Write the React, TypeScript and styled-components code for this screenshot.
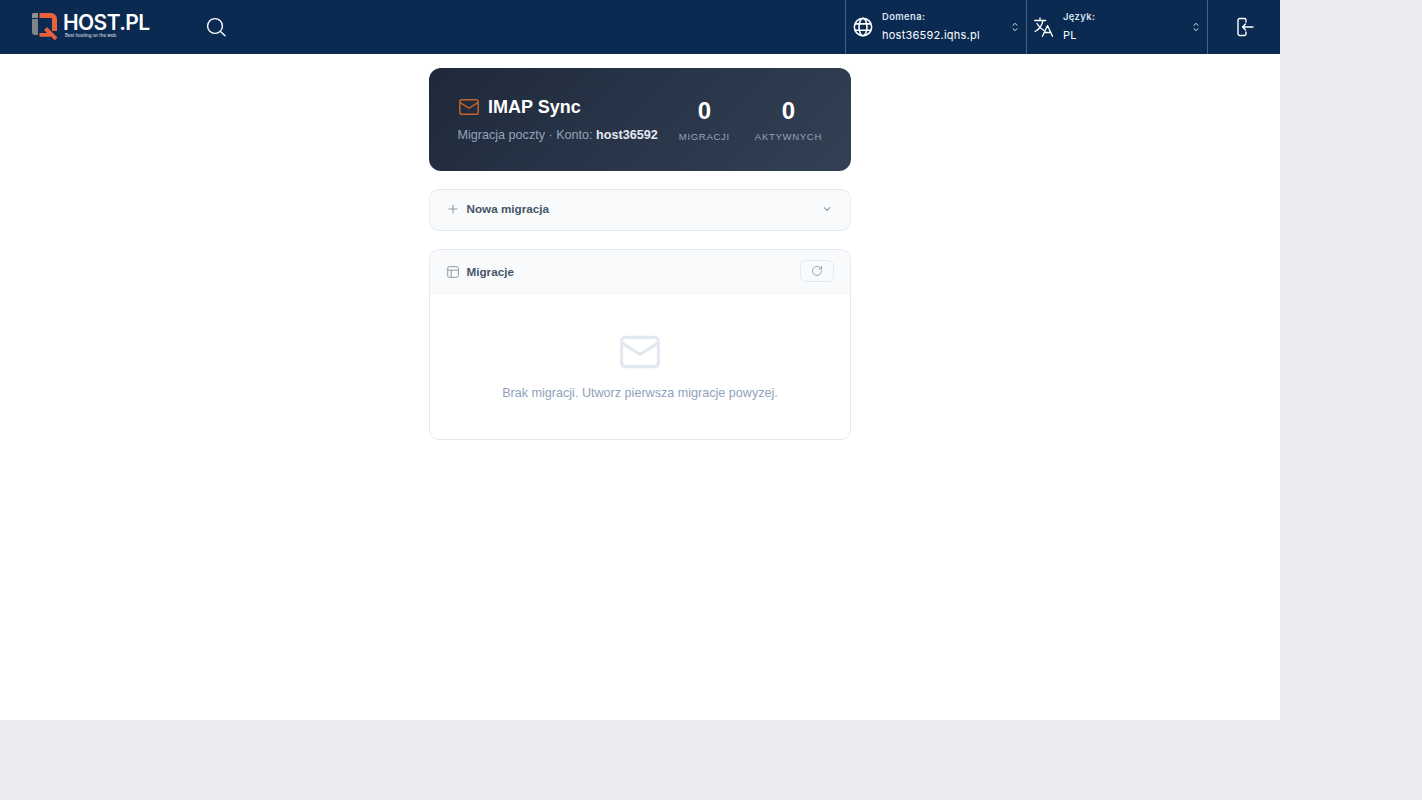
import React from "react";
import styled, { createGlobalStyle } from "styled-components";

const Global = createGlobalStyle`
  html, body { margin: 0; padding: 0; background: #eaeaef; height: 100%; }
  * { box-sizing: border-box; }
`;

const App_ = styled.div`
  width: 1280px;
  height: 720px;
  background: #fff;
  display: flex;
  flex-direction: column;
  font-family: "Liberation Sans", Arial, sans-serif;
`;

const TopBar = styled.header`
  height: 54px;
  background: #0a2a52;
  display: flex;
  align-items: stretch;
  flex: none;
`;

const LogoBox = styled.div`
  width: 206px;
  padding: 13px 0 0 31px;
  display: flex;
  align-items: flex-start;
  gap: 4px;
  flex: none;
`;

const LogoMark = styled.svg`
  flex: none;
  margin-top: -1px;
`;

const LogoWords = styled.div`
  display: flex;
  flex-direction: column;
  color: #fff;
`;

const LogoName = styled.span`
  font-family: Inter, sans-serif;
  font-weight: 600;
  font-size: 21px;
  line-height: 20px;
  height: 20px;
  letter-spacing: -0.6px;
  white-space: nowrap;
`;

const LogoTag = styled.span`
  font-family: Inter, sans-serif;
  font-size: 4.5px;
  line-height: 5px;
  padding-left: 2px;
  color: #e6ebf2;
  white-space: nowrap;
`;

const SearchBtn = styled.div`
  display: flex;
  align-items: center;
  flex: 1;
  color: #fff;
`;

const Selector = styled.div<{ $pad: number }>`
  width: 181px;
  border-left: 1px solid #4a6384;
  display: flex;
  align-items: center;
  padding-left: ${(p) => p.$pad}px;
  color: #fff;
  flex: none;
`;

const SelectorText = styled.div<{ $gap: number }>`
  display: flex;
  flex-direction: column;
  margin-left: ${(p) => p.$gap}px;
  font-family: Inter, "Noto Sans", sans-serif;
  flex: 1;
  padding-top: 1px;
`;

const SelectorLabel = styled.span`
  font-size: 9.4px;
  line-height: 13px;
  font-weight: 600;
  letter-spacing: 0.4px;
  color: #dbe3ee;
`;

const SelectorValue = styled.span`
  font-size: 11px;
  line-height: 19px;
  font-weight: 400;
  letter-spacing: 0.24px;
  color: #fff;
  margin-top: 3px;
`;

const Chevrons = styled.div`
  width: 8px;
  margin-right: 7px;
  display: flex;
  color: #dfe6ef;
`;

const LogoutBox = styled.div`
  width: 73px;
  border-left: 1px solid #4a6384;
  display: flex;
  align-items: center;
  justify-content: center;
  padding-left: 2px;
  color: #fff;
  flex: none;
`;

const Main = styled.main`
  width: 422px;
  margin: 14px auto 0;
  display: flex;
  flex-direction: column;
`;

const Hero = styled.section`
  height: 103px;
  border-radius: 12px;
  background: linear-gradient(135deg, #1e293b 0%, #334155 100%);
  display: flex;
  align-items: center;
  justify-content: space-between;
  padding: 0 29px 0 28.5px;
`;

const HeroLeft = styled.div`
  display: flex;
  flex-direction: column;
`;

const HeroTitle = styled.h1`
  margin: 0;
  display: flex;
  align-items: center;
  gap: 8.5px;
  font-size: 18px;
  line-height: 22px;
  font-weight: 700;
  color: #fff;
`;

const HeroSub = styled.p`
  margin: 9px 0 0;
  font-size: 12.6px;
  line-height: 16px;
  color: #94a3b8;
  white-space: nowrap;
  strong {
    color: #e2e8f0;
    font-weight: 700;
  }
`;

const Stats = styled.div`
  display: flex;
  gap: 25px;
  padding-top: 1px;
`;

const Stat = styled.div`
  display: flex;
  flex-direction: column;
  align-items: center;
`;

const StatNum = styled.span`
  font-size: 24px;
  line-height: 28px;
  font-weight: 700;
  color: #fff;
`;

const StatLabel = styled.span`
  font-size: 9.6px;
  line-height: 12px;
  margin-top: 6px;
  letter-spacing: 0.65px;
  text-transform: uppercase;
  color: #94a3b8;
`;

const Collapse = styled.section`
  height: 42px;
  margin-top: 18px;
  border: 1px solid #e8edf3;
  border-top-color: #e2e8f0;
  border-bottom-color: #e2e8f0;
  border-radius: 10px;
  background: #f8fafc;
  display: flex;
  align-items: center;
  padding: 0 18px 2px 17px;
  color: #8e9aab;
`;

const SectionTitle = styled.span<{ $raise?: number }>`
  margin-left: 7.5px;
  margin-bottom: ${(p) => p.$raise ?? 0}px;
  font-size: 11.7px;
  font-weight: 700;
  color: #475569;
  flex: 1;
`;

const Panel = styled.section`
  height: 191px;
  margin-top: 18px;
  border: 1px solid #e5eaf0;
  border-radius: 10px;
  overflow: hidden;
  display: flex;
  flex-direction: column;
`;

const PanelHead = styled.div`
  height: 44px;
  background: #f8fafc;
  border-bottom: 1px solid #f1f5f9;
  display: flex;
  align-items: center;
  padding: 0 16px 0 17px;
  color: #8e9aab;
  flex: none;
`;

const RefreshBtn = styled.div`
  width: 34px;
  height: 22px;
  margin-bottom: 2px;
  border: 1px solid #e2e8f0;
  border-radius: 6px;
  display: flex;
  align-items: center;
  justify-content: center;
  color: #94a3b8;
`;

const Empty = styled.div`
  flex: 1;
  display: flex;
  flex-direction: column;
  align-items: center;
  padding-top: 36px;
`;

const EmptyText = styled.p`
  margin: 11px 0 0;
  font-size: 12.6px;
  line-height: 16px;
  color: #8fa2bc;
`;

const Mail = ({ size, w, color }: { size: number; w: number; color: string }) => (
  <svg width={size} height={size} viewBox="0 0 24 24" fill="none" stroke={color} strokeWidth={w} strokeLinecap="round" strokeLinejoin="round">
    <rect x="2" y="4" width="20" height="16" rx="2" />
    <path d="M22 7l-8.97 5.7a1.94 1.94 0 0 1-2.06 0L2 7" />
  </svg>
);

const UpDown = () => (
  <svg width="8" height="12" viewBox="0 0 8 12" fill="none" stroke="currentColor" strokeWidth="1" strokeLinecap="round" strokeLinejoin="round">
    <path d="M2 4.300 4 2.300l2 2M2 7.700l2 2 2-2" />
  </svg>
);

export default function App() {
  return (
    <App_>
      <Global />
      <TopBar>
        <LogoBox>
          <LogoMark width="28" height="28" viewBox="0 0 28 28">
            <path d="M2.500 1H7v5H1V2.500A1.500 1.500 0 0 1 2.500 1z" fill="#8f9398" />
            <path d="M1 7h6v16H4a3 3 0 0 1-3-3z" fill="#7f8489" />
            <path d="M8.500 1H20a6 6 0 0 1 6 6v12h-5V7a1 1 0 0 0-1-1H8.500z" fill="#e8603c" />
            <path d="M8.500 21h7.500l-3-3 3-3 10.500 10.500-2.800 2.800-3.500-3.500H8.500z" fill="#e8603c" />
          </LogoMark>
          <LogoWords>
            <LogoName>HOST.PL</LogoName>
            <LogoTag>Best hosting on the web</LogoTag>
          </LogoWords>
        </LogoBox>
        <SearchBtn>
          <svg width="20" height="20" viewBox="0 0 20 20" fill="none" stroke="currentColor" strokeWidth="1.4" strokeLinecap="round">
            <circle cx="9" cy="9" r="7.400" />
            <path d="m14.500 14.500 4.500 4.300" />
          </svg>
        </SearchBtn>
        <Selector $pad={7}>
          <svg width="20" height="20" viewBox="0 0 24 24" fill="none" stroke="currentColor" strokeWidth="1.900">
            <circle cx="12" cy="12" r="10.400" />
            <ellipse cx="12" cy="12" rx="4.800" ry="10.400" />
            <path d="M2.400 8.200h19.200M2.400 15.800h19.200" />
          </svg>
          <SelectorText $gap={9}>
            <SelectorLabel>Domena:</SelectorLabel>
            <SelectorValue>host36592.iqhs.pl</SelectorValue>
          </SelectorText>
          <Chevrons><UpDown /></Chevrons>
        </Selector>
        <Selector $pad={7}>
          <svg width="20" height="20" viewBox="0 0 20 20" fill="none" stroke="currentColor" strokeWidth="1.300" strokeLinecap="round" strokeLinejoin="round">
            <path d="M6 1v2.500M0.700 3.500h11" />
            <path d="M9 3.500c-1 5-4 9-8 11M3 6.500c1.500 3 4 5.500 7 7" />
            <path d="M8.500 19.300l5-10.800 5 10.800M10.200 15.500h6.600" />
          </svg>
          <SelectorText $gap={9}>
            <SelectorLabel>Język:</SelectorLabel>
            <SelectorValue>PL</SelectorValue>
          </SelectorText>
          <Chevrons><UpDown /></Chevrons>
        </Selector>
        <LogoutBox>
          <svg width="20" height="20" viewBox="0 0 20 20" fill="none" stroke="currentColor" strokeWidth="1.400" strokeLinecap="round" strokeLinejoin="round">
            <path d="M11 5V3.200A1.700 1.700 0 0 0 9.300 1.500H4.700A1.700 1.700 0 0 0 3 3.200v13.600a1.700 1.700 0 0 0 1.700 1.700h4.600a1.700 1.700 0 0 0 1.700-1.700V15" />
            <path d="M18 10H7.500M10.500 7l-3 3 3 3" />
          </svg>
        </LogoutBox>
      </TopBar>
      <Main>
        <Hero>
          <HeroLeft>
            <HeroTitle>
              <Mail size={22} w={1.600} color="#c2652a" />
              IMAP Sync
            </HeroTitle>
            <HeroSub>
              Migracja poczty · Konto: <strong>host36592</strong>
            </HeroSub>
          </HeroLeft>
          <Stats>
            <Stat>
              <StatNum>0</StatNum>
              <StatLabel>Migracji</StatLabel>
            </Stat>
            <Stat>
              <StatNum>0</StatNum>
              <StatLabel>Aktywnych</StatLabel>
            </Stat>
          </Stats>
        </Hero>
        <Collapse>
          <svg width="12" height="12" viewBox="0 0 12 12" fill="none" stroke="currentColor" strokeWidth="1.100" strokeLinecap="round">
            <path d="M6 2v8M2 6h8" />
          </svg>
          <SectionTitle $raise={2}>Nowa migracja</SectionTitle>
          <svg width="10" height="10" viewBox="0 0 10 10" fill="none" stroke="currentColor" strokeWidth="1.100" strokeLinecap="round" strokeLinejoin="round">
            <path d="M2.200 3.700 5 6.500l2.800-2.800" />
          </svg>
        </Collapse>
        <Panel>
          <PanelHead>
            <svg width="12" height="12" viewBox="0 0 12 12" fill="none" stroke="currentColor" strokeWidth="1">
              <rect x="0.700" y="0.700" width="10.600" height="10.600" rx="1.500" />
              <path d="M0.700 4.200h10.600M4.200 4.200v7.100" />
            </svg>
            <SectionTitle>Migracje</SectionTitle>
            <RefreshBtn>
              <svg width="12" height="12" viewBox="0 0 24 24" fill="none" stroke="currentColor" strokeWidth="2" strokeLinecap="round" strokeLinejoin="round">
                <path d="M21 12a9 9 0 1 1-2.600-6.400L21 8" />
                <path d="M21 3v5h-5" />
              </svg>
            </RefreshBtn>
          </PanelHead>
          <Empty>
            <Mail size={44} w={1.700} color="#e2e8f0" />
            <EmptyText>Brak migracji. Utworz pierwsza migracje powyzej.</EmptyText>
          </Empty>
        </Panel>
      </Main>
    </App_>
  );
}
